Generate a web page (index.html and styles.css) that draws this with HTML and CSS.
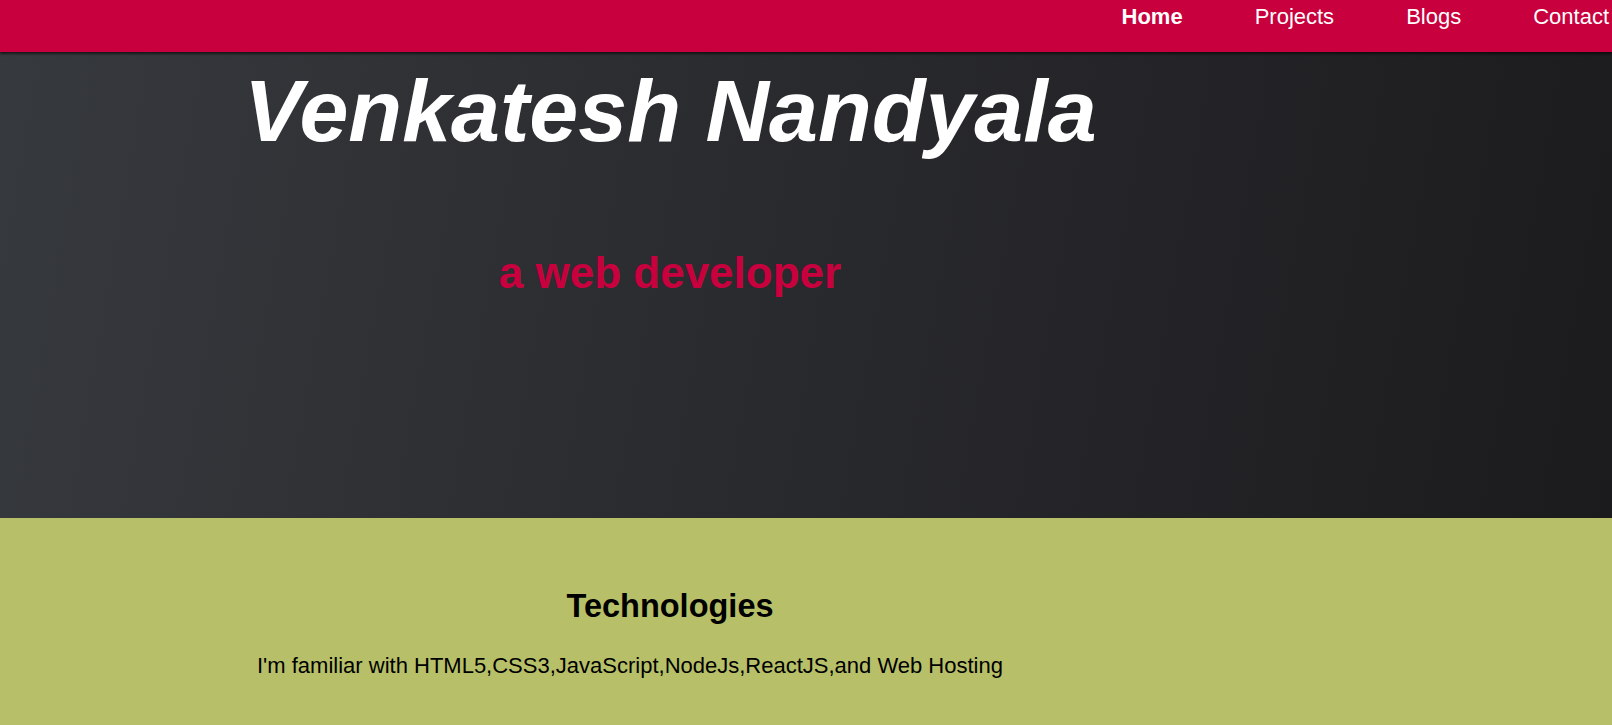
FILE: index.html
```html
<!DOCTYPE html>
<html lang="en">
<head>
<meta charset="utf-8">
<title>Venkatesh Nandyala</title>
<link rel="stylesheet" href="styles.css">
</head>
<body>
<header class="navbar">
  <nav>
    <ul class="nav-links">
      <li><a class="nav-link active" href="#">Home</a></li>
      <li><a class="nav-link" href="#">Projects</a></li>
      <li><a class="nav-link" href="#">Blogs</a></li>
      <li><a class="nav-link" href="#">Contact</a></li>
    </ul>
  </nav>
</header>
<section class="hero">
  <div class="container">
    <h1 class="hero-title">Venkatesh Nandyala</h1>
    <h2 class="hero-subtitle">a web developer</h2>
  </div>
</section>
<section class="tech">
  <div class="container">
    <h2 class="tech-title">Technologies</h2>
    <p class="tech-text">I'm familiar with HTML5,CSS3,JavaScript,NodeJs,ReactJS,and Web Hosting</p>
  </div>
</section>
</body>
</html>
```

FILE: styles.css
```css
* { box-sizing: border-box; }

html, body {
  margin: 0;
  padding: 0;
}

body {
  font-family: "Liberation Sans", Arial, Helvetica, sans-serif;
  background: #b7c068;
  overflow: hidden;
}

.navbar {
  position: relative;
  z-index: 2;
  height: 52px;
  background: #c8003e;
  box-shadow: 0 2px 2px rgba(0, 0, 0, 0.55);
}

.nav-links {
  list-style: none;
  margin: 0;
  padding: 4px 3px 0 0;
  display: flex;
  justify-content: flex-end;
  gap: 72px;
}

.nav-link {
  color: #ffffff;
  text-decoration: none;
  font-size: 22px;
  line-height: 26px;
}

.nav-link.active {
  font-weight: bold;
}

.hero {
  height: 466px;
  padding-top: 15px;
  background: linear-gradient(100deg, #36393d 0%, #2a2b2f 45%, #1b1b1d 100%);
}

.container {
  width: 852px;
  margin-left: 244px;
}

.hero-title {
  margin: 0;
  color: #ffffff;
  font-size: 88px;
  line-height: 88px;
  font-style: italic;
  font-weight: bold;
  white-space: nowrap;
}

.hero-subtitle {
  margin: 92px 0 0;
  color: #c8003e;
  font-size: 44px;
  line-height: 52px;
  font-weight: bold;
  text-align: center;
}

.tech {
  padding-top: 69px;
  background: #b7c068;
}

.tech-title {
  margin: 0;
  color: #000000;
  font-size: 32.5px;
  line-height: 38px;
  font-weight: bold;
  text-align: center;
}

.tech-text {
  margin: 28px 0 0;
  padding-left: 13px;
  color: #000000;
  font-size: 22px;
  line-height: 26px;
  white-space: nowrap;
}
```
